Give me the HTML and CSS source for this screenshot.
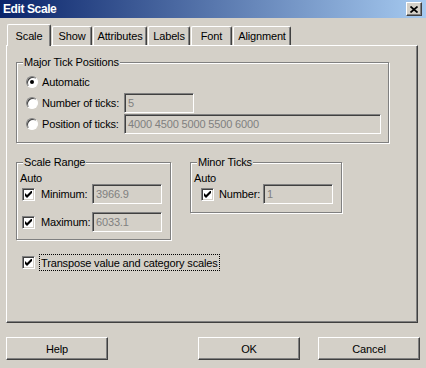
FILE: index.html
```html
<!DOCTYPE html>
<html>
<head>
<meta charset="utf-8">
<link rel="stylesheet" href="styles.css">
</head>
<body>
<div class="window">
  <div class="titlebar">
    <span class="title">Edit Scale</span>
    <span class="close"><svg width="8" height="7" viewBox="0 0 8 7"><path d="M0.5 0.5L7.5 6.5M7.5 0.5L0.5 6.5" stroke="#000" stroke-width="1.7"/></svg></span>
  </div>
  <div class="main">
    <div class="tabs">
      <div class="tab active t-scale">Scale</div>
      <div class="tab t-show">Show</div>
      <div class="tab t-attr">Attributes</div>
      <div class="tab t-labels">Labels</div>
      <div class="tab t-font">Font</div>
      <div class="tab t-align">Alignment</div>
    </div>
    <div class="panel">
      <div class="group g-major">
        <span class="legend">Major Tick Positions</span>
        <div class="row"><span class="radio checked"></span><span class="rlabel">Automatic</span></div>
        <div class="row"><span class="radio"></span><span class="rlabel">Number of ticks:</span><span class="input w70">5</span></div>
        <div class="row"><span class="radio"></span><span class="rlabel">Position of ticks:</span><span class="input wide">4000 4500 5000 5500 6000</span></div>
      </div>
      <div class="groups">
        <div class="group g-range">
          <span class="legend">Scale Range</span>
          <div class="auto">Auto</div>
          <div class="crow">
            <span class="check"><svg width="7" height="7" viewBox="0 0 7 7"><polygon points="0,2 2,4 7,-1 7,2 2,7 0,5" fill="#000"/></svg></span>
            <span class="clabel">Minimum:</span><span class="input w70">3966.9</span>
          </div>
          <div class="crow">
            <span class="check"><svg width="7" height="7" viewBox="0 0 7 7"><polygon points="0,2 2,4 7,-1 7,2 2,7 0,5" fill="#000"/></svg></span>
            <span class="clabel">Maximum:</span><span class="input w70">6033.1</span>
          </div>
        </div>
        <div class="group g-minor">
          <span class="legend">Minor Ticks</span>
          <div class="auto">Auto</div>
          <div class="crow">
            <span class="check"><svg width="7" height="7" viewBox="0 0 7 7"><polygon points="0,2 2,4 7,-1 7,2 2,7 0,5" fill="#000"/></svg></span>
            <span class="clabel">Number:</span><span class="input w70">1</span>
          </div>
        </div>
      </div>
      <div class="transpose">
        <span class="check"><svg width="7" height="7" viewBox="0 0 7 7"><polygon points="0,2 2,4 7,-1 7,2 2,7 0,5" fill="#000"/></svg></span>
        <span class="focus">Transpose value and category scales</span>
      </div>
    </div>
    <div class="buttons">
      <div class="btn">Help</div>
      <div class="btn btn-ok">OK</div>
      <div class="btn btn-cancel">Cancel</div>
    </div>
  </div>
</div>
</body>
</html>
```
FILE: styles.css
```css
html, body {
  margin: 0;
  padding: 0;
  background: #d4d0c8;
}

.window {
  width: 426px;
  height: 368px;
  background: #d4d0c8;
  font-family: "Liberation Sans", Arial, sans-serif;
  font-size: 11px;
  letter-spacing: -0.15px;
  color: #000;
  overflow: hidden;
}

.titlebar {
  height: 18px;
  display: flex;
  align-items: center;
  justify-content: space-between;
  padding: 0 4px 0 3px;
  background: linear-gradient(to right, #0a246a, #a6caf0);
}

.title {
  color: #fff;
  font-weight: bold;
  font-size: 12px;
  letter-spacing: -0.4px;
}

.close {
  width: 16px;
  height: 14px;
  box-sizing: border-box;
  background: #d4d0c8;
  border: 1px solid;
  border-color: #fff #404040 #404040 #fff;
  box-shadow: inset -1px -1px #808080;
  display: flex;
  align-items: center;
  justify-content: center;
}

.main {
  padding: 6px 6px 0 6px;
}

.tabs {
  display: flex;
  align-items: flex-end;
  gap: 1px;
  height: 21px;
  margin-left: 1px;
}

.tab {
  height: 19px;
  box-sizing: border-box;
  border-left: 1px solid #fff;
  border-top: 1px solid #fff;
  border-right: 1px solid #404040;
  box-shadow: inset -1px 0 #808080;
  border-radius: 2px 2px 0 0;
  display: flex;
  align-items: center;
  justify-content: center;
  background: #d4d0c8;
}

.tab.active {
  height: 22px;
  margin-bottom: -1px;
  position: relative;
  z-index: 1;
}

.t-scale { width: 44px; }
.t-show { width: 40px; }
.t-attr { width: 54px; }
.t-labels { width: 42px; }
.t-font { width: 41px; }
.t-align { width: 58px; }

.panel {
  width: 412px;
  height: 278px;
  box-sizing: border-box;
  border: 1px solid;
  border-color: #fff #404040 #404040 #fff;
  box-shadow: inset -1px -1px #808080;
  padding: 16px 0 0 9px;
}

.group {
  position: relative;
  box-sizing: border-box;
  border: 1px solid #808080;
  box-shadow: 1px 1px #fff, inset 1px 1px #fff;
}

.legend {
  position: absolute;
  top: -7px;
  left: 6px;
  padding: 0 1px;
  line-height: 13px;
  background: #d4d0c8;
}

.g-major {
  width: 373px;
  height: 81px;
  padding: 9px 0 0 9px;
  display: flex;
  flex-direction: column;
  gap: 1px;
}

.row {
  display: flex;
  align-items: center;
  height: 20px;
}

.radio {
  width: 12px;
  height: 12px;
  box-sizing: border-box;
  border-radius: 50%;
  border: 1px solid;
  border-color: #808080 #fff #fff #808080;
  box-shadow: inset 1px 1px #404040;
  background: #fff;
  margin-right: 4px;
  display: flex;
  align-items: center;
  justify-content: center;
}

.radio.checked::after {
  content: "";
  width: 4px;
  height: 4px;
  border-radius: 50%;
  background: #000;
}

.rlabel {
  width: 82px;
}

.input {
  box-sizing: border-box;
  height: 20px;
  border: 1px solid;
  border-color: #808080 #fff #fff #808080;
  box-shadow: inset 1px 1px #404040, inset -1px -1px #d4d0c8;
  color: #808080;
  padding: 0 3px;
  display: flex;
  align-items: center;
}

.w70 { width: 70px; }
.wide { width: 257px; }

.groups {
  display: flex;
  align-items: flex-start;
  gap: 19px;
  margin-top: 19px;
}

.g-range {
  width: 155px;
  height: 78px;
  padding: 9px 0 0 3px;
}

.g-minor {
  width: 152px;
  height: 51px;
  padding: 9px 0 0 3px;
}

.auto {
  height: 12px;
  line-height: 12px;
}

.crow {
  display: flex;
  align-items: center;
  height: 20px;
  padding-left: 2px;
}

.crow + .crow {
  margin-top: 8px;
}

.g-minor .crow {
  padding-left: 7px;
}

.check {
  width: 13px;
  height: 13px;
  box-sizing: border-box;
  border: 1px solid;
  border-color: #808080 #fff #fff #808080;
  box-shadow: inset 1px 1px #404040, inset -1px -1px #d4d0c8;
  background: #fff;
  display: flex;
  align-items: center;
  justify-content: center;
  margin-right: 6px;
  flex: none;
}

.g-range .clabel { width: 51px; }
.g-minor .check { margin-right: 5px; }
.g-minor .clabel { width: 44px; }

.transpose {
  display: flex;
  align-items: center;
  height: 17px;
  margin-top: 14px;
  padding-left: 6px;
}

.transpose .check {
  margin-right: 4px;
}

.focus {
  box-sizing: border-box;
  height: 17px;
  border: 1px dotted #000;
  padding: 0 1px;
  display: flex;
  align-items: center;
}

.buttons {
  display: flex;
  margin-top: 14px;
}

.btn {
  width: 102px;
  height: 23px;
  box-sizing: border-box;
  border: 1px solid;
  border-color: #fff #404040 #404040 #fff;
  box-shadow: inset -1px -1px #808080;
  display: flex;
  align-items: center;
  justify-content: center;
}

.btn-ok { margin-left: auto; }
.btn-cancel { margin-left: 18px; }
```
